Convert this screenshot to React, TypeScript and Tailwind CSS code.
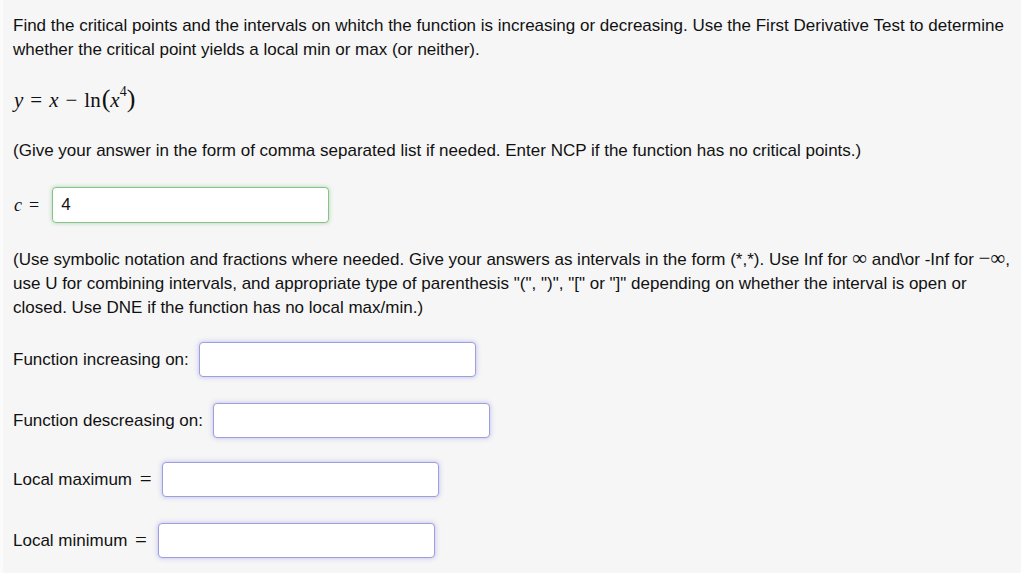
import React from "react";

const sans = { fontFamily: '"Liberation Sans", Arial, Helvetica, sans-serif' };
const serif = { fontFamily: '"Liberation Serif", "Times New Roman", serif' };

function Box({ className = "" }: { className?: string }) {
  return (
    <div
      className={
        "h-[35px] w-[277px] rounded-[4px] bg-white border border-[#9f9fdc] shadow-[0_0_5px_rgba(110,110,230,0.45)] " +
        className
      }
    />
  );
}

function Eq() {
  return (
    <span className="ml-[3px] text-[21px] leading-none relative top-[1px]" style={serif}>
      =
    </span>
  );
}

export default function App() {
  return (
    <div
      className="w-[1021px] h-[573px] bg-[#f6f6f6] text-[#111] border-l-[3px] border-l-[#fbfbfb] overflow-hidden"
      style={sans}
    >
      <div className="pl-[10px] pt-[14px] text-[17px] leading-[24px]">
        <p className="w-[1000px]">
          Find the critical points and the intervals on whitch the function is increasing or decreasing. Use the First Derivative Test to determine whether the critical point yields a local min or max (or neither).
        </p>

        <div className="mt-[24px] h-[28px] flex items-center pl-[1px] text-[21px]" style={serif}>
          <span className="italic">y</span>
          <span className="mx-[7px]">=</span>
          <span className="italic">x</span>
          <span className="mx-[7px]">−</span>
          <span>ln</span>
          <span className="text-[26px] leading-none relative top-[-1px] ml-[1px]">(</span>
          <span className="italic">x</span>
          <span className="text-[14px] leading-none relative top-[-8px]">4</span>
          <span className="text-[26px] leading-none relative top-[-1px]">)</span>
        </div>

        <p className="mt-[25px]">
          (Give your answer in the form of comma separated list if needed. Enter NCP if the function has no critical points.)
        </p>

        <div className="mt-[24px] flex items-center">
          <span className="text-[18px] pl-[1px]" style={serif}>
            <span className="italic">c</span>
            <span className="ml-[7px]">=</span>
          </span>
          <div className="ml-[13px] h-[36px] w-[277px] rounded-[4px] bg-white flex items-center pl-[8px] text-[17px] border border-[#86c386] shadow-[0_0_4px_rgba(90,170,90,0.45)]">
            4
          </div>
        </div>

        <p className="mt-[25px] w-[1006px]">
          (Use symbolic notation and fractions where needed. Give your answers as intervals in the form (*,*). Use Inf for <span className="text-[21px] leading-[20px] align-baseline" style={serif}>∞</span> and\or -Inf for <span className="text-[21px] leading-[20px] align-baseline" style={serif}>−∞</span>, use U for combining intervals, and appropriate type of parenthesis "(", ")", "[" or "]" depending on whether the interval is open or closed. Use DNE if the function has no local max/min.)
        </p>

        <div className="mt-[22px] flex items-center">
          <span>Function increasing on:</span>
          <Box className="ml-[10px]" />
        </div>

        <div className="mt-[26px] flex items-center">
          <span>Function descreasing on:</span>
          <Box className="ml-[10px]" />
        </div>

        <div className="mt-[24px] flex items-center">
          <span>
            Local maximum <Eq />
          </span>
          <Box className="ml-[10px]" />
        </div>

        <div className="mt-[26px] flex items-center">
          <span>
            Local minimum <Eq />
          </span>
          <Box className="ml-[11px]" />
        </div>
      </div>
    </div>
  );
}
